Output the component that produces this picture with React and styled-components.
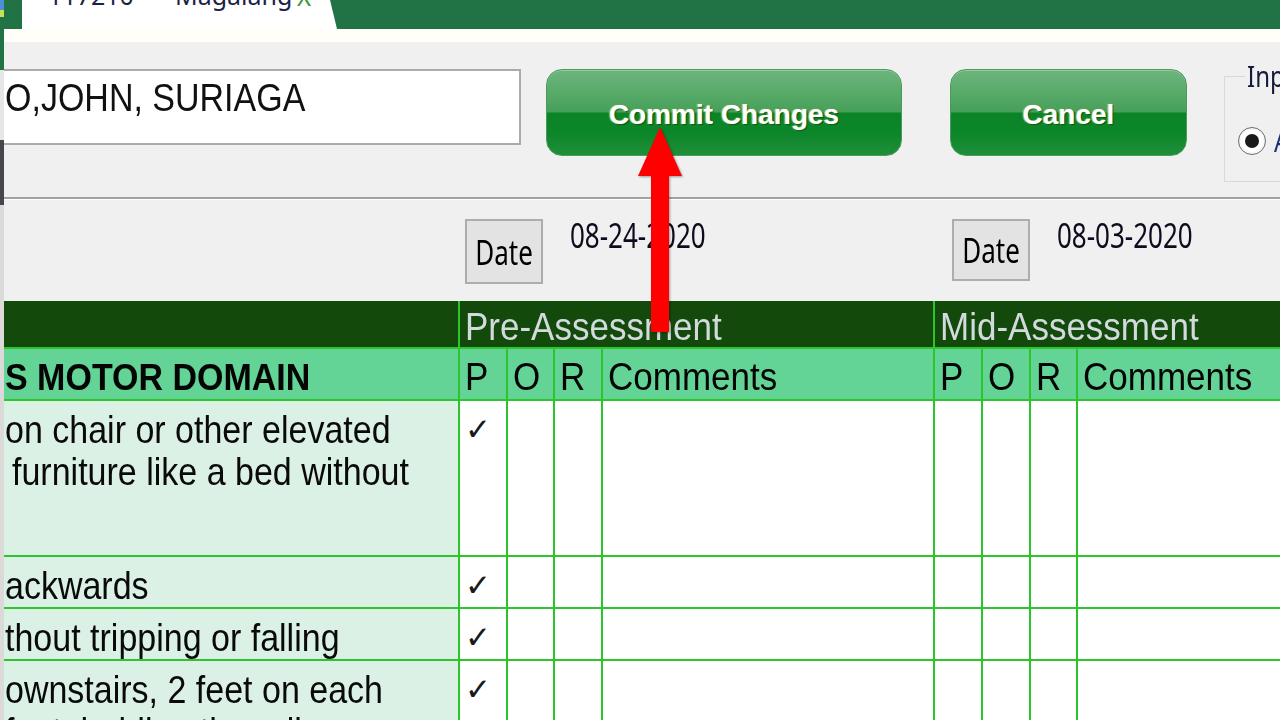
import React from 'react';
import styled, { createGlobalStyle } from 'styled-components';

const GlobalStyle = createGlobalStyle`
  html, body {
    margin: 0;
    padding: 0;
    width: 1280px;
    height: 720px;
    overflow: hidden;
    background: #f0f0f0;
  }
  body {
    font-family: "Liberation Sans", Arial, sans-serif;
  }
`;

const Screen = styled.div`
  position: relative;
  display: flex;
  width: 1280px;
  height: 720px;
  overflow: hidden;
`;

const EdgeStrip = styled.div`
  width: 4px;
  flex: none;
  display: flex;
  flex-direction: column;
`;

const EdgePiece = styled.div`
  height: ${p => p.$h}px;
  flex: ${p => (p.$grow ? 1 : 'none')};
  background: ${p => p.$c};
`;

const Main = styled.div`
  flex: 1;
  min-width: 0;
  display: flex;
  flex-direction: column;
  overflow: hidden;
`;

const Tall = styled.span`
  display: inline-block;
  transform: scaleY(${p => p.$s || 1.15});
  transform-origin: ${p => p.$origin || 'center'};
`;

/* ---------- tab strip ---------- */

const TabBar = styled.div`
  height: 29px;
  flex: none;
  display: flex;
  padding-left: 18px;
  background: #217346;
`;

const Tab = styled.div`
  width: 315px;
  box-sizing: border-box;
  padding-left: 26px;
  display: flex;
  align-items: flex-start;
  overflow: hidden;
  background: #fff;
  clip-path: polygon(0 0, 308px 0, 315px 100%, 0 100%);
  font-family: "Noto Sans", "Liberation Sans", sans-serif;
  font-size: 25px;
  line-height: 26px;
  color: #1b1f4a;
`;

const TabText = styled.span`
  width: ${p => p.$w}px;
  flex: none;
  margin-top: -18px;
  white-space: nowrap;
`;

const TabClose = styled.span`
  margin-top: -16px;
  color: #3d9a2c;
  font-size: 24px;
`;

const CreamStrip = styled.div`
  height: 13px;
  flex: none;
  background: #fffef8;
`;

/* ---------- top panel ---------- */

const TopPanel = styled.div`
  height: 155px;
  flex: none;
  box-sizing: border-box;
  padding-top: 27px;
  display: flex;
  align-items: flex-start;
  background: #f0f0f0;
`;

const NameBox = styled.div`
  width: 517px;
  height: 76px;
  flex: none;
  box-sizing: border-box;
  padding: 6px 0 0 1px;
  background: #fff;
  border: 2px solid #ababab;
  border-left: none;
  font-size: 34px;
  line-height: 40px;
  color: #111;
  white-space: nowrap;
`;

const GlossButton = styled.button`
  width: ${p => p.$w}px;
  height: 87px;
  flex: none;
  margin-left: ${p => p.$ml}px;
  padding: 5px 0 0;
  border: 1px solid #4c9a5c;
  border-radius: 16px;
  background: linear-gradient(
    to bottom,
    #6cb47d 0%,
    #5aab6b 25%,
    #46a059 49%,
    #0b8427 51%,
    #0d862a 75%,
    #1f8f3a 100%
  );
  box-shadow: inset 0 1px 0 rgba(255, 255, 255, 0.3);
  color: #fff;
  font-family: "Liberation Sans", Arial, sans-serif;
  font-weight: bold;
  font-size: 28px;
  text-shadow: 1px 1px 1px rgba(0, 50, 0, 0.55), -1px 0 1px rgba(255, 255, 140, 0.55);
`;

const GroupBox = styled.fieldset`
  width: 120px;
  height: 120px;
  flex: none;
  box-sizing: border-box;
  margin: -7px 0 0 37px;
  padding: 0 0 0 13px;
  border: 1px solid #d9d9d9;
  display: flex;
  align-items: flex-start;
`;

const GroupLegend = styled.legend`
  margin-left: 7px;
  padding: 0 2px;
  font-family: "Noto Sans", "Liberation Sans", sans-serif;
  font-size: 24px;
  line-height: 28px;
  color: #151a3a;
`;

const RadioRow = styled.div`
  display: flex;
  align-items: center;
  gap: 8px;
  margin-top: 34px;
  font-family: "Noto Sans", "Liberation Sans", sans-serif;
  font-size: 24px;
  color: #1a2f7a;
`;

const RadioDot = styled.span`
  width: 28px;
  height: 28px;
  flex: none;
  box-sizing: border-box;
  border-radius: 50%;
  border: 1px solid #6d6d6d;
  background: radial-gradient(circle, #ffffff 55%, #dcdcdc 100%);
  display: flex;
  align-items: center;
  justify-content: center;

  &::after {
    content: '';
    width: 14px;
    height: 14px;
    border-radius: 50%;
    background: #1a1a1a;
  }
`;

const Separator = styled.div`
  height: 1px;
  flex: none;
  border-top: 2px solid #a2a2a2;
  background: #fff;
`;

/* ---------- date panel ---------- */

const DatePanel = styled.div`
  height: 101px;
  flex: none;
  box-sizing: border-box;
  padding: 19px 0 0 461px;
  display: flex;
  align-items: flex-start;
  background: #f0f0f0;
`;

const DateGroup = styled.div`
  width: ${p => p.$w}px;
  flex: none;
  display: flex;
  align-items: flex-start;
  gap: 27px;
`;

const DateButton = styled.button`
  width: 78px;
  height: ${p => p.$h}px;
  flex: none;
  padding: 0;
  background: #e3e3e3;
  border: 2px solid #adadad;
  font-family: "Noto Sans", "Liberation Sans", sans-serif;
  font-size: 26px;
  color: #000;
`;

const DateValue = styled.div`
  margin-top: 1px;
  font-family: "Noto Sans", "Liberation Sans", sans-serif;
  font-size: 26px;
  line-height: 30px;
  color: #0c0c1e;
  white-space: nowrap;
`;

/* ---------- table ---------- */

const Sheet = styled.table`
  width: 1396px;
  flex: none;
  table-layout: fixed;
  border-collapse: collapse;
  font-family: "Liberation Sans", Arial, sans-serif;
`;

const GroupHeadRow = styled.tr`
  height: 47px;
  background: #134a0b;
`;

const GroupHead = styled.th`
  border: 2px solid #2cc52c;
  border-top: none;
  ${p => p.$first && 'border-left: none;'}
  padding: 6px 0 0 5px;
  text-align: left;
  font-weight: normal;
  font-size: 35px;
  color: #d3dadd;
  white-space: nowrap;
  overflow: hidden;
`;

const ColHeadRow = styled.tr`
  height: 52px;
  background: #64d396;
`;

const ColHead = styled.th`
  border: 2px solid #2cc52c;
  ${p => p.$first && 'border-left: none;'}
  padding: 6px 0 0 ${p => (p.$first ? 1 : 5)}px;
  text-align: left;
  font-weight: ${p => (p.$bold ? 'bold' : 'normal')};
  font-size: ${p => (p.$bold ? 34 : 35)}px;
  color: #050505;
  white-space: nowrap;
  overflow: hidden;
`;

const BodyRow = styled.tr`
  height: ${p => p.$h}px;
`;

const Cell = styled.td`
  border: 2px solid #2cc52c;
  ${p => p.$first && 'border-left: none;'}
  background: ${p => (p.$first ? '#dbf1e6' : '#ffffff')};
  vertical-align: top;
  padding: 7px 0 0 ${p => (p.$first ? 1 : 5)}px;
  overflow: hidden;
`;

const CellText = styled.div`
  font-size: 34px;
  line-height: 37.4px;
  color: #0a0a0a;
  transform: scaleY(1.15);
  transform-origin: top left;
`;

const Check = styled.div`
  font-family: "DejaVu Sans", sans-serif;
  font-weight: 200;
  font-size: 31px;
  line-height: 43px;
  color: #1a1a1a;
`;

/* ---------- overlay arrow ---------- */

const ArrowMark = styled.svg`
  position: absolute;
  left: 636px;
  top: 124px;
  width: 48px;
  height: 212px;
  filter: drop-shadow(1px 1px 1px rgba(0, 0, 0, 0.35));
`;

const columns = [455, 48, 47, 48, 332, 48, 48, 47, 323];

const rows = [
  { h: 156, text: ['on chair or other elevated', 'furniture like a bed without'], indent: [0, 7] },
  { h: 51, text: ['ackwards'] },
  { h: 52, text: ['thout tripping or falling'] },
  { h: 90, text: ['ownstairs, 2 feet on each', 'foot, holding the rail'] },
];

function App() {
  return (
    <Screen>
      <GlobalStyle />
      <EdgeStrip>
        <EdgePiece $h={29} $c="linear-gradient(#4d8fd6 0 35%, #c6e05a 35% 60%, #217346 60%)" />
        <EdgePiece $h={41} $c="#217346" />
        <EdgePiece $h={70} $c="#e6e6e6" />
        <EdgePiece $h={65} $c="#46474d" />
        <EdgePiece $grow $c="#dcdad8" />
      </EdgeStrip>

      <Main>
        <TabBar>
          <Tab>
            <TabText $w={127}>117210</TabText>
            <TabText $w={122}>Magalang</TabText>
            <TabClose>X</TabClose>
          </Tab>
        </TabBar>
        <CreamStrip />

        <TopPanel>
          <NameBox>
            <Tall $s={1.15}>O,JOHN, SURIAGA</Tall>
          </NameBox>
          <GlossButton $w={356} $ml={25}>Commit Changes</GlossButton>
          <GlossButton $w={237} $ml={48}>Cancel</GlossButton>
          <GroupBox>
            <GroupLegend>
              <Tall $s={1.2}>Inp</Tall>
            </GroupLegend>
            <RadioRow>
              <RadioDot />
              <Tall $s={1.2}>A</Tall>
            </RadioRow>
          </GroupBox>
        </TopPanel>
        <Separator />

        <DatePanel>
          <DateGroup $w={487}>
            <DateButton $h={65}>
              <Tall $s={1.3}>Date</Tall>
            </DateButton>
            <DateValue>
              <Tall $s={1.3}>08-24-2020</Tall>
            </DateValue>
          </DateGroup>
          <DateGroup $w={300}>
            <DateButton $h={62}>
              <Tall $s={1.3}>Date</Tall>
            </DateButton>
            <DateValue>
              <Tall $s={1.3}>08-03-2020</Tall>
            </DateValue>
          </DateGroup>
        </DatePanel>

        <Sheet>
          <colgroup>
            {columns.map((w, i) => (
              <col key={i} style={{ width: w }} />
            ))}
          </colgroup>
          <thead>
            <GroupHeadRow>
              <GroupHead $first />
              <GroupHead colSpan={4}>
                <Tall $s={1.1}>Pre-Assessment</Tall>
              </GroupHead>
              <GroupHead colSpan={4}>
                <Tall $s={1.1}>Mid-Assessment</Tall>
              </GroupHead>
            </GroupHeadRow>
            <ColHeadRow>
              <ColHead $first $bold>
                <Tall $s={1.1}>S MOTOR DOMAIN</Tall>
              </ColHead>
              {['P', 'O', 'R', 'Comments', 'P', 'O', 'R', 'Comments'].map((t, i) => (
                <ColHead key={i}>
                  <Tall $s={1.1}>{t}</Tall>
                </ColHead>
              ))}
            </ColHeadRow>
          </thead>
          <tbody>
            {rows.map((r, i) => (
              <BodyRow key={i} $h={r.h}>
                <Cell $first>
                  <CellText>
                    {r.text.map((line, j) => (
                      <div key={j} style={{ paddingLeft: r.indent ? r.indent[j] : 0 }}>{line}</div>
                    ))}
                  </CellText>
                </Cell>
                <Cell>
                  <Check>✓</Check>
                </Cell>
                {Array.from({ length: 7 }).map((_, k) => (
                  <Cell key={k} />
                ))}
              </BodyRow>
            ))}
          </tbody>
        </Sheet>
      </Main>

      <ArrowMark viewBox="0 0 48 212">
        <polygon points="24,3 46,52 33,52 33,208 15,208 15,52 2,52" fill="#ff0000" />
      </ArrowMark>
    </Screen>
  );
}

export default App;
